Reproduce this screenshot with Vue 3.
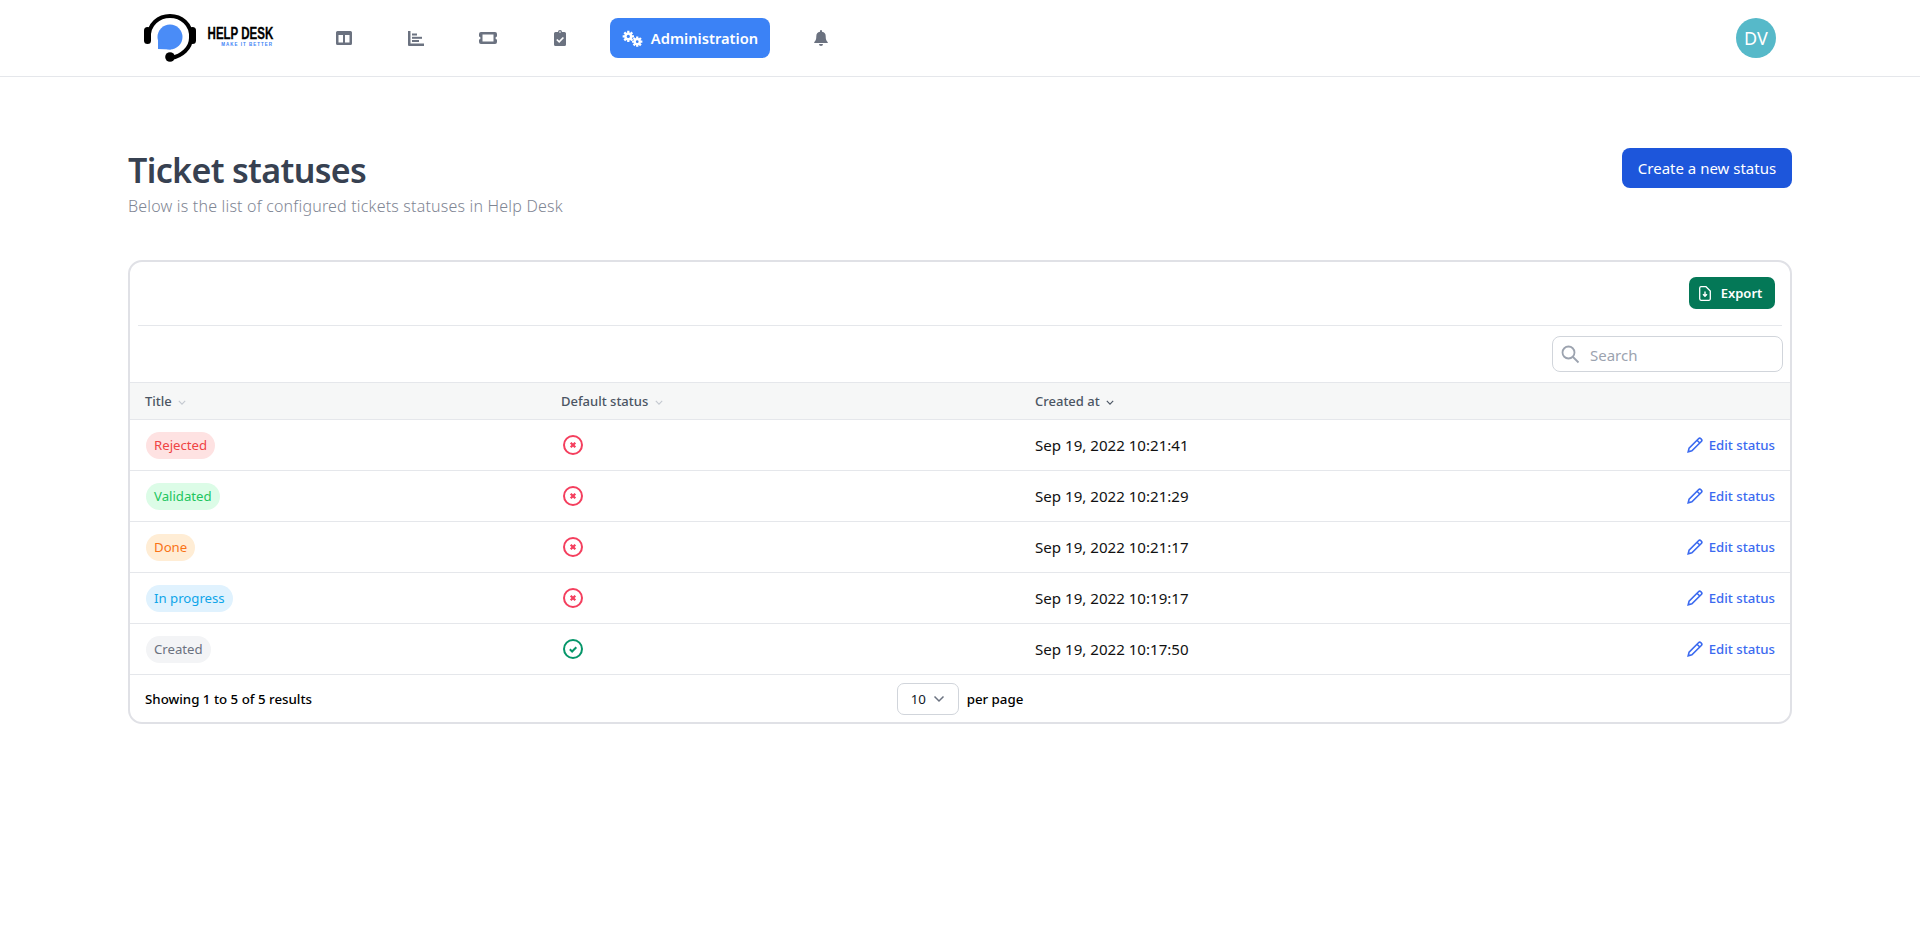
<script setup>
const rows = [
  { title: 'Rejected', cls: 'red', ok: false, date: 'Sep 19, 2022 10:21:41' },
  { title: 'Validated', cls: 'green', ok: false, date: 'Sep 19, 2022 10:21:29' },
  { title: 'Done', cls: 'orange', ok: false, date: 'Sep 19, 2022 10:21:17' },
  { title: 'In progress', cls: 'blue', ok: false, date: 'Sep 19, 2022 10:19:17' },
  { title: 'Created', cls: 'gray', ok: true, date: 'Sep 19, 2022 10:17:50' },
]
</script>

<template>
  <div class="page">
    <header class="topbar">
      <div class="logo">
        <svg class="logo-mark" viewBox="0 0 52 48" width="52" height="48">
          <path d="M5 24 C4 10 15 2 26 2 C37 2 48 10 47 24 C47 34 38 42 27 44" fill="none" stroke="#000" stroke-width="4"/>
          <rect x="0" y="13" width="7" height="17" rx="3.5" fill="#000"/>
          <rect x="45" y="13" width="7" height="17" rx="3.5" fill="#000"/>
          <circle cx="26" cy="23" r="12.500" fill="#4a8cf7"/>
          <path d="M14 24 L14 35 L27 35.500 Z" fill="#4a8cf7"/>
          <circle cx="26" cy="43" r="4.800" fill="#000"/>
        </svg>
        <div class="logo-text">
          <span class="logo-title">HELP DESK</span>
          <span class="logo-sub">MAKE IT BETTER</span>
        </div>
      </div>
      <nav class="nav">
        <a class="nav-item">
          <svg viewBox="0 0 16 14" width="16" height="14"><path fill="#6b7280" fill-rule="evenodd" d="M1.500 0h13A1.500 1.500 0 0 1 16 1.500v11a1.500 1.500 0 0 1-1.500 1.500h-13A1.500 1.500 0 0 1 0 12.500v-11A1.500 1.500 0 0 1 1.500 0zM2.500 4v7.500h4.500V4zM9 4v7.500h4.500V4z"/></svg>
        </a>
        <a class="nav-item">
          <svg viewBox="0 0 16 15" width="16" height="15"><path fill="#6b7280" d="M0 0h2.500v12.500H16V15H1a1 1 0 0 1-1-1z"/><rect x="4" y="2.500" width="5" height="2" fill="#6b7280"/><rect x="4" y="5.800" width="10" height="2" fill="#6b7280"/><rect x="4" y="9" width="7" height="2" fill="#6b7280"/></svg>
        </a>
        <a class="nav-item">
          <svg viewBox="0 0 18 12" width="18" height="12"><path fill="#6b7280" fill-rule="evenodd" d="M2 0h14a2 2 0 0 1 2 2v2.500a1.500 1.500 0 0 0 0 3V10a2 2 0 0 1-2 2H2a2 2 0 0 1-2-2V7.500a1.500 1.500 0 0 0 0-3V2a2 2 0 0 1 2-2zM3.500 2.500v7h11v-7z"/></svg>
        </a>
        <a class="nav-item">
          <svg viewBox="0 0 12 16" width="12" height="16"><path fill="#6b7280" fill-rule="evenodd" d="M6 0a2 2 0 0 1 2 2h2.500A1.500 1.500 0 0 1 12 3.500v11a1.500 1.500 0 0 1-1.500 1.500h-9A1.500 1.500 0 0 1 0 14.500v-11A1.500 1.500 0 0 1 1.500 2H4a2 2 0 0 1 2-2zm0 1.300a.8.800 0 1 0 0 1.600.8.800 0 0 0 0-1.600z"/><path d="M2.800 9.500l2.400 2.400L9.400 7.500" fill="none" stroke="#fff" stroke-width="1.700"/></svg>
        </a>
        <a class="nav-item active">
          <svg viewBox="0 0 20 16" width="21" height="17">
            <g fill="#fff">
              <circle cx="6" cy="6" r="3.800"/>
              <circle cx="14.500" cy="11" r="3.400"/>
              <g stroke="#fff" stroke-width="2.200">
                <path d="M6 .6v10.800M.6 6h10.800M2.200 2.200l7.600 7.600M9.800 2.200l-7.600 7.600"/>
                <path d="M14.500 6.100v9.800M9.600 11h9.800M11 7.500l7 7M18 7.500l-7 7"/>
              </g>
              <circle cx="6" cy="6" r="1.500" fill="#3b82f6"/>
              <circle cx="14.500" cy="11" r="1.300" fill="#3b82f6"/>
            </g>
          </svg>
          <span>Administration</span>
        </a>
        <a class="nav-item bell">
          <svg viewBox="0 0 14 16" width="14" height="16"><path fill="#6b7280" d="M7 0a1 1 0 0 1 1 1v.7A4.600 4.600 0 0 1 11.700 6.300c0 3.900 1.100 4.800 2 5.800.3.400 0 1-.5 1H.8c-.5 0-.8-.6-.5-1 .9-1 2-1.900 2-5.800A4.600 4.600 0 0 1 6 1.700V1a1 1 0 0 1 1-1zM5 14h4a2 2 0 0 1-4 0z"/></svg>
        </a>
      </nav>
      <div class="avatar">DV</div>
    </header>

    <main class="content">
      <div class="page-head">
        <div>
          <h1>Ticket statuses</h1>
          <p>Below is the list of configured tickets statuses in Help Desk</p>
        </div>
        <button class="create">Create a new status</button>
      </div>

      <section class="card">
        <div class="toolbar">
          <button class="export">
            <svg viewBox="0 0 12 15" width="12" height="15"><path d="M2 .7h5L11.300 5v7.800a1.500 1.500 0 0 1-1.500 1.500H2A1.500 1.500 0 0 1 .7 12.800V2A1.500 1.500 0 0 1 2 .7z" fill="none" stroke="#fff" stroke-width="1.300"/><path d="M6 5.500v4.500M4 8.300l2 2 2-2" fill="none" stroke="#fff" stroke-width="1.400"/></svg>
            <span>Export</span>
          </button>
        </div>
        <div class="search-row">
          <label class="search">
            <svg viewBox="0 0 20 20" width="20" height="20"><circle cx="8.500" cy="8.500" r="6" fill="none" stroke="#9ca3af" stroke-width="1.800"/><path d="M13 13l5.500 5.500" stroke="#9ca3af" stroke-width="1.800"/></svg>
            <span>Search</span>
          </label>
        </div>
        <div class="thead row-grid">
          <div class="th">Title <svg class="sort" viewBox="0 0 10 6" width="8" height="5"><path d="M1 1l4 4 4-4" fill="none" stroke="#c4c9d0" stroke-width="1.400"/></svg></div>
          <div class="th">Default status <svg class="sort" viewBox="0 0 10 6" width="8" height="5"><path d="M1 1l4 4 4-4" fill="none" stroke="#c4c9d0" stroke-width="1.400"/></svg></div>
          <div class="th">Created at <svg class="sort" viewBox="0 0 10 6" width="8" height="5"><path d="M1 1l4 4 4-4" fill="none" stroke="#4b5563" stroke-width="1.400"/></svg></div>
          <div></div>
        </div>
        <div v-for="r in rows" :key="r.title" class="tr row-grid">
          <div><span class="badge" :class="r.cls">{{ r.title }}</span></div>
          <div class="status-cell">
            <svg v-if="r.ok" viewBox="0 0 20 20" width="20" height="20"><circle cx="10" cy="10" r="9" fill="none" stroke="#059669" stroke-width="2"/><path d="M6.800 10.300l2.300 2.200 4.200-4.300" fill="none" stroke="#059669" stroke-width="2"/></svg>
            <svg v-else viewBox="0 0 20 20" width="20" height="20"><circle cx="10" cy="10" r="9" fill="none" stroke="#f43f5e" stroke-width="2"/><path d="M7.700 7.700l4.600 4.600M12.300 7.700l-4.600 4.600" fill="none" stroke="#f43f5e" stroke-width="2.200"/></svg>
          </div>
          <div class="date">{{ r.date }}</div>
          <div class="action">
            <a class="edit">
              <svg viewBox="0 0 16 16" width="16" height="16"><path d="M1.200 14.800l.9-3.700L11.500 1.700a1.700 1.700 0 0 1 2.400 0l.4.400a1.700 1.700 0 0 1 0 2.400L4.900 13.900z M10 3.200l2.800 2.800" fill="none" stroke="#3b6af0" stroke-width="1.600"/></svg>
              <span>Edit status</span>
            </a>
          </div>
        </div>
        <div class="foot">
          <div class="showing">Showing 1 to 5 of 5 results</div>
          <div class="per-page">
            <div class="select">
              <span>10</span>
              <svg viewBox="0 0 12 8" width="12" height="8"><path d="M1.500 1.500L6 6l4.500-4.500" fill="none" stroke="#6b7280" stroke-width="1.500"/></svg>
            </div>
            <span>per page</span>
          </div>
          <div></div>
        </div>
      </section>
    </main>
  </div>
</template>

<style>
html, body { margin: 0; background: #fff; }
</style>

<style scoped>
.page {
  min-height: 929px;
  font-family: "Noto Sans", "Open Sans", sans-serif;
  color: #000;
  background: #fff;
}
.topbar {
  box-sizing: border-box;
  height: 77px;
  border-bottom: 1px solid #e5e7eb;
  display: flex;
  align-items: center;
  padding: 0 144px;
}
.logo { display: flex; align-items: center; width: 164px; gap: 12px; }
.logo-mark { flex: none; }
.logo-text { display: flex; flex-direction: column; align-items: flex-end; width: 65px; margin-top: -4px; }
.logo-title {
  font: 700 16px/17px "Liberation Sans", sans-serif;
  color: #000;
  white-space: nowrap;
  transform: scaleX(.72);
  transform-origin: right center;
  -webkit-text-stroke: .3px #000;
}
.logo-sub {
  font: 700 4.500px/6px "Liberation Sans", sans-serif;
  letter-spacing: 1px;
  color: #3b82f6;
  white-space: nowrap;
}
.nav { display: flex; align-items: center; flex: 1; }
.nav-item {
  box-sizing: border-box;
  width: 72px;
  height: 40px;
  display: flex;
  align-items: center;
  justify-content: center;
}
.nav-item.active {
  width: 160px;
  margin-left: 14px;
  background: #3b82f6;
  border-radius: 8px;
  color: #fff;
  font-size: 14.700px;
  font-weight: 600;
  gap: 8px;
}
.nav-item.bell { margin-left: 15px; }
.avatar {
  width: 40px;
  height: 40px;
  border-radius: 50%;
  background: #56b9c9;
  color: #fff;
  font-size: 18px;
  display: flex;
  align-items: center;
  justify-content: center;
}
.content { width: 1664px; margin: 0 auto; }
.page-head {
  display: flex;
  justify-content: space-between;
  align-items: flex-start;
  padding-top: 71px;
  height: 112px;
}
h1 {
  margin: 0;
  font-size: 34px;
  line-height: 44px;
  font-weight: 600;
  letter-spacing: -.65px;
  color: #374151;
}
p {
  margin: 3px 0 0;
  font-size: 16px;
  line-height: 22px;
  font-weight: 300;
  letter-spacing: .19px;
  color: #7f8694;
}
.create {
  width: 170px;
  height: 40px;
  border: 0;
  border-radius: 8px;
  background: #1d56db;
  color: #fff;
  font: 400 15px "Noto Sans", sans-serif;
}
.card {
  box-sizing: border-box;
  border: 2px solid #e0e1e6;
  border-radius: 14px;
  overflow: hidden;
}
.toolbar {
  display: flex;
  justify-content: flex-end;
  height: 64px;
  box-sizing: border-box;
  margin: 0 8px;
  padding: 15px 7px 0 0;
  border-bottom: 1px solid #e5e7eb;
}
.export {
  width: 86px;
  height: 32px;
  border: 0;
  border-radius: 7px;
  background: #047857;
  color: #fff;
  display: flex;
  align-items: center;
  justify-content: center;
  gap: 10px;
  padding: 0 11px 0 8px;
  font: 600 13px "Noto Sans", sans-serif;
}
.search-row {
  height: 56px;
  box-sizing: border-box;
  padding: 10px 7px 0 0;
  display: flex;
  justify-content: flex-end;
}
.search {
  box-sizing: border-box;
  width: 231px;
  height: 36px;
  border: 1px solid #d1d5db;
  border-radius: 8px;
  display: flex;
  align-items: center;
  gap: 10px;
  padding-left: 7px;
  font-size: 15px;
  color: #9ca3af;
}
.search span { margin-top: 1px; }
.row-grid {
  display: grid;
  grid-template-columns: 416px 474px 1fr 200px;
  align-items: center;
  padding: 0 15px;
}
.thead {
  height: 38px;
  background: #f6f7f7;
  border-top: 1px solid #e5e7eb;
  border-bottom: 1px solid #e5e7eb;
  box-sizing: border-box;
}
.th {
  font-size: 13px;
  font-weight: 500;
  color: #4b5563;
}
.sort { margin-left: 3px; vertical-align: 1px; }
.tr {
  height: 51px;
  box-sizing: border-box;
  border-bottom: 1px solid #e5e7eb;
}
.badge {
  display: inline-block;
  padding: 0 8px;
  height: 27px;
  line-height: 27px;
  border-radius: 14px;
  font-size: 13.200px;
  margin-left: 1px;
}
.red { background: #fee2e2; color: #ef4444; }
.green { background: #dcfce7; color: #22c55e; }
.orange { background: #ffedd5; color: #f97316; }
.blue { background: #e0f2fe; color: #0ea5e9; }
.gray { background: #f3f4f6; color: #6b7280; }
.status-cell { display: flex; align-items: center; margin-left: 2px; }
.date { font-size: 15.100px; color: #111; }
.action { display: flex; justify-content: flex-end; }
.edit {
  display: flex;
  align-items: center;
  gap: 6px;
  font-size: 13.200px;
  font-weight: 500;
  color: #3b6af0;
}
.foot {
  display: grid;
  grid-template-columns: 1fr auto 1fr;
  align-items: center;
  height: 47px;
  padding: 0 15px;
  font-size: 13.300px;
  font-weight: 500;
}
.per-page { display: flex; align-items: center; gap: 8px; }
.select {
  box-sizing: border-box;
  width: 62px;
  height: 32px;
  border: 1px solid #d1d5db;
  border-radius: 7px;
  display: flex;
  align-items: center;
  justify-content: space-between;
  padding: 0 13px;
  font-weight: 400;
  color: #111827;
}
</style>
